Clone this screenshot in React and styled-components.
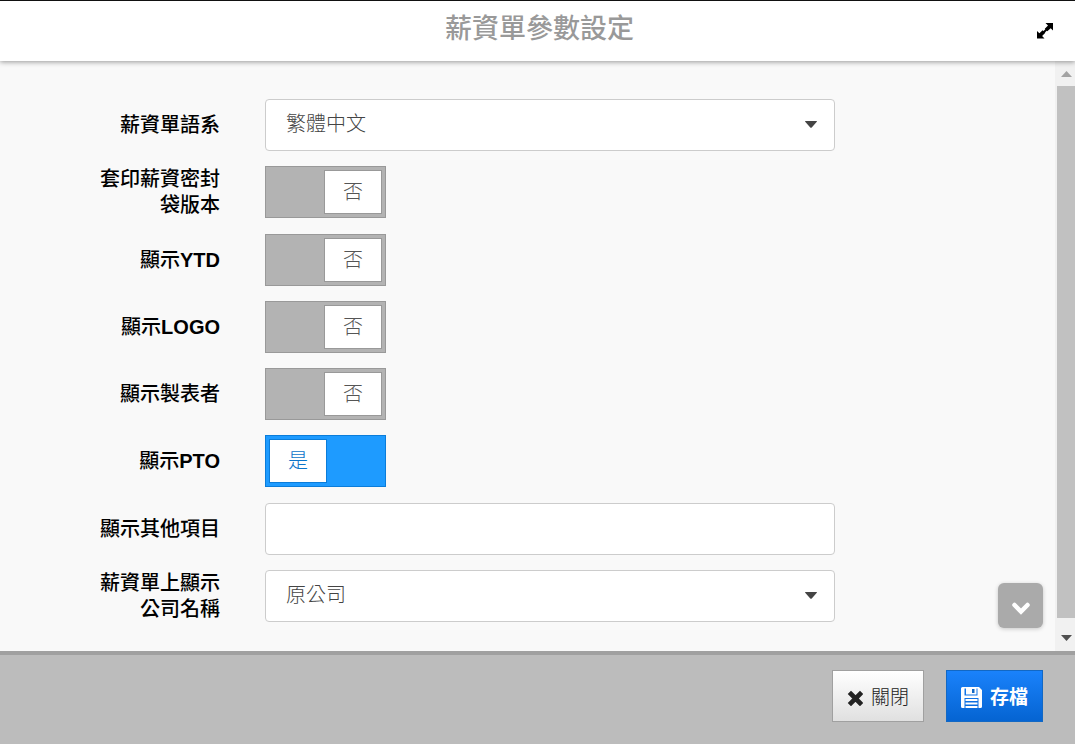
import React, { useRef, useState } from "react";
import styled, { createGlobalStyle } from "styled-components";

const GlobalStyle = createGlobalStyle`
  * {
    box-sizing: border-box;
  }
  body {
    margin: 0;
    background: #f9f9f9;
    color: #000;
    font-family: "Liberation Sans", "Noto Sans CJK TC", sans-serif;
    font-size: 20px;
  }
  button, input, select {
    margin: 0;
    font: inherit;
  }
`;

const Dialog = styled.div`
  display: flex;
  flex-direction: column;
  min-height: 100vh;
`;

const Header = styled.header`
  position: relative;
  z-index: 1;
  display: grid;
  grid-template-columns: 1fr auto 1fr;
  align-items: center;
  height: 61px;
  padding: 0 20px 0 24px;
  border-top: 1px solid #111;
  background: #fff;
  box-shadow: 0 1px 5px rgba(0, 0, 0, 0.4);
`;

const Title = styled.h1`
  grid-column: 2;
  margin: 0;
  padding-bottom: 4px;
  color: #999;
  font-size: 27px;
  font-weight: 500;
  line-height: 36px;
`;

const ExpandButton = styled.button`
  justify-self: end;
  display: flex;
  padding: 0;
  border: 0;
  background: none;
  cursor: pointer;
`;

const Body = styled.main`
  flex: 1;
  display: flex;
`;

const Form = styled.form`
  flex: 1;
  display: flex;
  flex-direction: column;
  justify-content: space-between;
  gap: 15px;
  padding: 38px 0 29px 95px;
`;

const Row = styled.div`
  display: grid;
  grid-template-columns: 125px minmax(0, 570px);
  column-gap: 45px;
  align-items: center;
`;

const Label = styled.label`
  font-weight: 500;
  line-height: 26px;
  text-align: right;
`;

const Latin = styled.span`
  font-weight: 700;
`;

const SelectBox = styled.div`
  position: relative;
`;

const Select = styled.select`
  display: block;
  width: 100%;
  height: 52px;
  padding: 0 50px 2px 20px;
  border: 1px solid #ccc;
  border-radius: 4px;
  background: #fff;
  color: #444;
  font-weight: 300;
  appearance: none;
`;

const Caret = styled.svg`
  position: absolute;
  top: 50%;
  right: 18px;
  margin-top: -4px;
  pointer-events: none;
`;

const TextInput = styled.input`
  display: block;
  width: 100%;
  height: 52px;
  padding: 0 20px;
  border: 1px solid #ccc;
  border-radius: 4px;
  background: #fff;
  color: #444;
`;

const Switch = styled.label`
  display: flex;
  justify-content: ${({ $on }) => ($on ? "flex-start" : "flex-end")};
  width: 121px;
  height: 52px;
  padding: 3px;
  border: 1px solid ${({ $on }) => ($on ? "#0b7dda" : "#999")};
  background: ${({ $on }) => ($on ? "#1e9bff" : "#b3b3b3")};
  cursor: pointer;
`;

const Check = styled.input`
  position: absolute;
  opacity: 0;
`;

const Knob = styled.span`
  width: 58px;
  border: 1px solid ${({ $on }) => ($on ? "#0b7dda" : "#999")};
  background: #fff;
  color: ${({ $on }) => ($on ? "#0b75c9" : "#555")};
  font-weight: 300;
  line-height: 43px;
  text-align: center;
`;

const ScrollBar = styled.div`
  display: flex;
  flex-direction: column;
  width: 20px;
  padding-left: 2px;
  background: #f1f1f1;
`;

const ScrollButton = styled.button`
  display: flex;
  align-items: center;
  justify-content: center;
  height: ${({ $tall }) => ($tall ? "33px" : "25px")};
  padding: ${({ $tall }) => ($tall ? "6px 0 0 1px" : "0 0 0 1px")};
  border: 0;
  background: none;
  color: ${({ $muted }) => ($muted ? "#a3a3a3" : "#505050")};
`;

const Thumb = styled.div`
  flex: 1;
  background: #c1c1c1;
`;

const Footer = styled.footer`
  position: relative;
  display: flex;
  justify-content: flex-end;
  gap: 22px;
  padding: 15px 32px 22px;
  border-top: 4px solid #a0a0a0;
  background: #bcbcbc;
`;

const Button = styled.button`
  display: flex;
  align-items: center;
  gap: 8px;
  height: 52px;
  padding: 0 14px 2px;
  border: 1px solid ${({ $primary }) => ($primary ? "#1268c4" : "#a0a0a0")};
  background: ${({ $primary }) =>
    $primary
      ? "linear-gradient(#1a82fb, #0564d2)"
      : "linear-gradient(#fff, #e0e0e0)"};
  color: ${({ $primary }) => ($primary ? "#fff" : "#222")};
  font-size: 19px;
  font-weight: ${({ $primary }) => ($primary ? 700 : 300)};
  cursor: pointer;
`;

const ButtonIcon = styled.svg`
  margin-top: 5px;
`;

const ScrollDown = styled.button`
  position: absolute;
  right: 32px;
  bottom: 116px;
  display: flex;
  align-items: center;
  justify-content: center;
  width: 45px;
  height: 45px;
  padding: 5px 0 0;
  border: 0;
  border-radius: 6px;
  background: #aaa;
  box-shadow: 0 1px 4px rgba(0, 0, 0, 0.2);
  cursor: pointer;
`;

const SelectField = ({ id, options }) => (
  <SelectBox>
    <Select id={id}>
      {options.map((option) => (
        <option key={option}>{option}</option>
      ))}
    </Select>
    <Caret width="12" height="7" viewBox="0 0 12 7" aria-hidden="true">
      <path d="M0 .5Q0 0 .5 0H11.5Q12 0 12 .5L6.5 6.8H5.5Z" fill="#444" />
    </Caret>
  </SelectBox>
);

const SwitchField = ({ id, initial }) => {
  const [on, setOn] = useState(initial);
  return (
    <Switch $on={on}>
      <Check
        id={id}
        type="checkbox"
        checked={on}
        onChange={() => setOn(!on)}
      />
      <Knob $on={on}>{on ? "是" : "否"}</Knob>
    </Switch>
  );
};

const switches = [
  { id: "envelope", label: "套印薪資密封袋版本", on: false },
  { id: "ytd", label: "顯示", latin: "YTD", on: false },
  { id: "logo", label: "顯示", latin: "LOGO", on: false },
  { id: "preparer", label: "顯示製表者", on: false },
  { id: "pto", label: "顯示", latin: "PTO", on: true },
];

const App = () => {
  const formEnd = useRef(null);

  return (
    <>
      <GlobalStyle />
      <Dialog>
        <Header>
          <Title>薪資單參數設定</Title>
          <ExpandButton type="button" aria-label="放大">
            <svg width="20" height="20" viewBox="0 0 20 20">
              <path d="M10.5 2H18V9.5L15.7 7.2L12.3 10.3L9.8 7.8L13 4.5ZM2 10L4.4 12.2L7.6 9.2L10.3 11.8L7.1 15L9.5 17.5H2Z" />
              <path d="M8 12L12 8" stroke="#000" strokeWidth="2" />
            </svg>
          </ExpandButton>
        </Header>

        <Body>
          <Form id="payslip" onSubmit={(e) => e.preventDefault()}>
            <Row>
              <Label htmlFor="language">薪資單語系</Label>
              <SelectField id="language" options={["繁體中文", "English"]} />
            </Row>
            {switches.map((item) => (
              <Row key={item.id}>
                <Label htmlFor={item.id}>
                  {item.label}
                  {item.latin && <Latin>{item.latin}</Latin>}
                </Label>
                <SwitchField id={item.id} initial={item.on} />
              </Row>
            ))}
            <Row>
              <Label htmlFor="others">顯示其他項目</Label>
              <TextInput id="others" type="text" />
            </Row>
            <Row ref={formEnd}>
              <Label htmlFor="company">薪資單上顯示公司名稱</Label>
              <SelectField id="company" options={["原公司"]} />
            </Row>
          </Form>
          <ScrollBar>
            <ScrollButton type="button" aria-label="向上捲動" $muted>
              <svg width="11" height="6" viewBox="0 0 11 6" fill="currentColor">
                <path d="M0 6L5.5 0L11 6Z" />
              </svg>
            </ScrollButton>
            <Thumb />
            <ScrollButton type="button" aria-label="向下捲動" $tall>
              <svg width="11" height="6" viewBox="0 0 11 6" fill="currentColor">
                <path d="M0 0H11L5.5 6Z" />
              </svg>
            </ScrollButton>
          </ScrollBar>
        </Body>

        <Footer>
          <Button type="button">
            <ButtonIcon width="16" height="16" viewBox="0 0 16 16">
              <path
                d="M4 4L13 13M13 4L4 13"
                stroke="currentColor"
                strokeWidth="4.6"
                strokeLinecap="square"
              />
            </ButtonIcon>
            關閉
          </Button>
          <Button type="submit" form="payslip" $primary>
            <ButtonIcon width="21" height="21" viewBox="0 0 21 21">
              <path
                fill="currentColor"
                fillRule="evenodd"
                d="M1.5 0H18L21 3V19.5Q21 21 19.5 21H1.5Q0 21 0 19.5V1.5Q0 0 1.5 0ZM3.5 1.5V8.5H16.5V1.5ZM3.5 11V21H17.5V11Z"
              />
              <path
                d="M5 1H15.5V7.5H5ZM4.5 12H16.5V14H4.5ZM4.5 15.5H16.5V17.5H4.5ZM4.5 19H16.5V21H4.5Z"
                fill="currentColor"
              />
              <path d="M11 2H13.5V6H11Z" fill="#1268c4" />
            </ButtonIcon>
            存檔
          </Button>
          <ScrollDown
            type="button"
            aria-label="捲到底部"
            onClick={() => formEnd.current.scrollIntoView()}
          >
            <svg width="18" height="13" viewBox="0 0 18 13" fill="none">
              <path
                d="M2.5 3L9 9.5L15.5 3"
                stroke="#fff"
                strokeWidth="4.5"
                strokeLinecap="round"
              />
            </svg>
          </ScrollDown>
        </Footer>
      </Dialog>
    </>
  );
};

export default App;
